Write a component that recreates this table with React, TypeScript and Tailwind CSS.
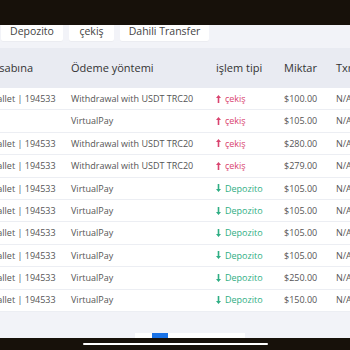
import { FC } from 'react'

type Row = {
    account: string
    method: string
    type: 'out' | 'in'
    amount: string
}

const rows: Row[] = [
    { account: 'Wallet | 194533', method: 'Withdrawal with USDT TRC20', type: 'out', amount: '$100.00' },
    { account: '', method: 'VirtualPay', type: 'out', amount: '$105.00' },
    { account: 'Wallet | 194533', method: 'Withdrawal with USDT TRC20', type: 'out', amount: '$280.00' },
    { account: 'Wallet | 194533', method: 'Withdrawal with USDT TRC20', type: 'out', amount: '$279.00' },
    { account: 'Wallet | 194533', method: 'VirtualPay', type: 'in', amount: '$105.00' },
    { account: 'Wallet | 194533', method: 'VirtualPay', type: 'in', amount: '$105.00' },
    { account: 'Wallet | 194533', method: 'VirtualPay', type: 'in', amount: '$105.00' },
    { account: 'Wallet | 194533', method: 'VirtualPay', type: 'in', amount: '$105.00' },
    { account: 'Wallet | 194533', method: 'VirtualPay', type: 'in', amount: '$250.00' },
    { account: 'Wallet | 194533', method: 'VirtualPay', type: 'in', amount: '$150.00' },
]

const Arrow: FC<{ down?: boolean }> = ({ down }) => (
    <svg
        width="5"
        height="8"
        viewBox="0 0 5 8"
        className={down ? 'mr-[4px] rotate-180' : 'mr-[4px]'}
        fill="currentColor"
    >
        <path d="M2.5 0 L5 3 L3.3 3 L3.3 8 L1.7 8 L1.7 3 L0 3 Z" />
    </svg>
)

const TypeCell: FC<{ type: Row['type'] }> = ({ type }) =>
    type === 'out' ? (
        <span className="flex items-center text-[#d9436f]">
            <Arrow />
            çekiş
        </span>
    ) : (
        <span className="flex items-center text-[#2fae84]">
            <Arrow down />
            Depozito
        </span>
    )

const App: FC = () => {
    return (
        <div
            className="flex h-[350px] w-[350px] flex-col overflow-hidden bg-[#f2f3f8]"
            style={{ fontFamily: '"Open Sans", "Liberation Sans", sans-serif' }}
        >
            <div className="h-[25px] shrink-0 bg-[#17110a]" />

            {/* tabs */}
            <div className="flex h-[16px] shrink-0 gap-[6px] pl-[1px] text-[10.5px] leading-[10px] text-[#444]">
                <div className="flex w-[62px] justify-center rounded-b-[2px] bg-white pt-[1px] shadow-[0_1px_1px_rgba(0,0,0,0.03)]">
                    Depozito
                </div>
                <div className="flex w-[45px] justify-center rounded-b-[2px] bg-white pt-[1px] shadow-[0_1px_1px_rgba(0,0,0,0.03)]">
                    çekiş
                </div>
                <div className="flex w-[89px] justify-center rounded-b-[2px] bg-white pt-[1px] shadow-[0_1px_1px_rgba(0,0,0,0.03)]">
                    Dahili Transfer
                </div>
            </div>

            {/* table */}
            <div className="mt-[7px] ml-[-11px] w-[420px] shrink-0">
                <div className="flex h-[40px] items-center bg-[#e9ebf2] text-[11px] text-[#333]">
                    <div className="ml-[-4px] w-[86px]">Hesabına</div>
                    <div className="w-[145px]">Ödeme yöntemi</div>
                    <div className="w-[68px]">işlem tipi</div>
                    <div className="w-[52px]">Miktar</div>
                    <div>TxnID</div>
                </div>
                {rows.map((r, i) => (
                    <div
                        key={i}
                        className="flex h-[22.4px] items-center border-b border-[#eceef3] bg-white text-[9px] text-[#555]"
                    >
                        <div className="w-[82px]">{r.account}</div>
                        <div className="w-[145px]">{r.method}</div>
                        <div className="w-[68px]">
                            <TypeCell type={r.type} />
                        </div>
                        <div className="w-[52px]">{r.amount}</div>
                        <div>N/A</div>
                    </div>
                ))}
            </div>

            {/* pagination peeking above the bottom bar */}
            <div className="mt-auto flex h-[5px] shrink-0 pl-[135px]">
                <div className="flex w-[110px] bg-white pl-[17px]">
                    <div className="w-[16px] bg-[#1a73e8]" />
                </div>
            </div>
            <div className="flex h-[12px] shrink-0 justify-center bg-[#17110a] pt-[5px]">
                <div className="h-[2px] w-[185px] rounded-full bg-white" />
            </div>
        </div>
    )
}

export default App
